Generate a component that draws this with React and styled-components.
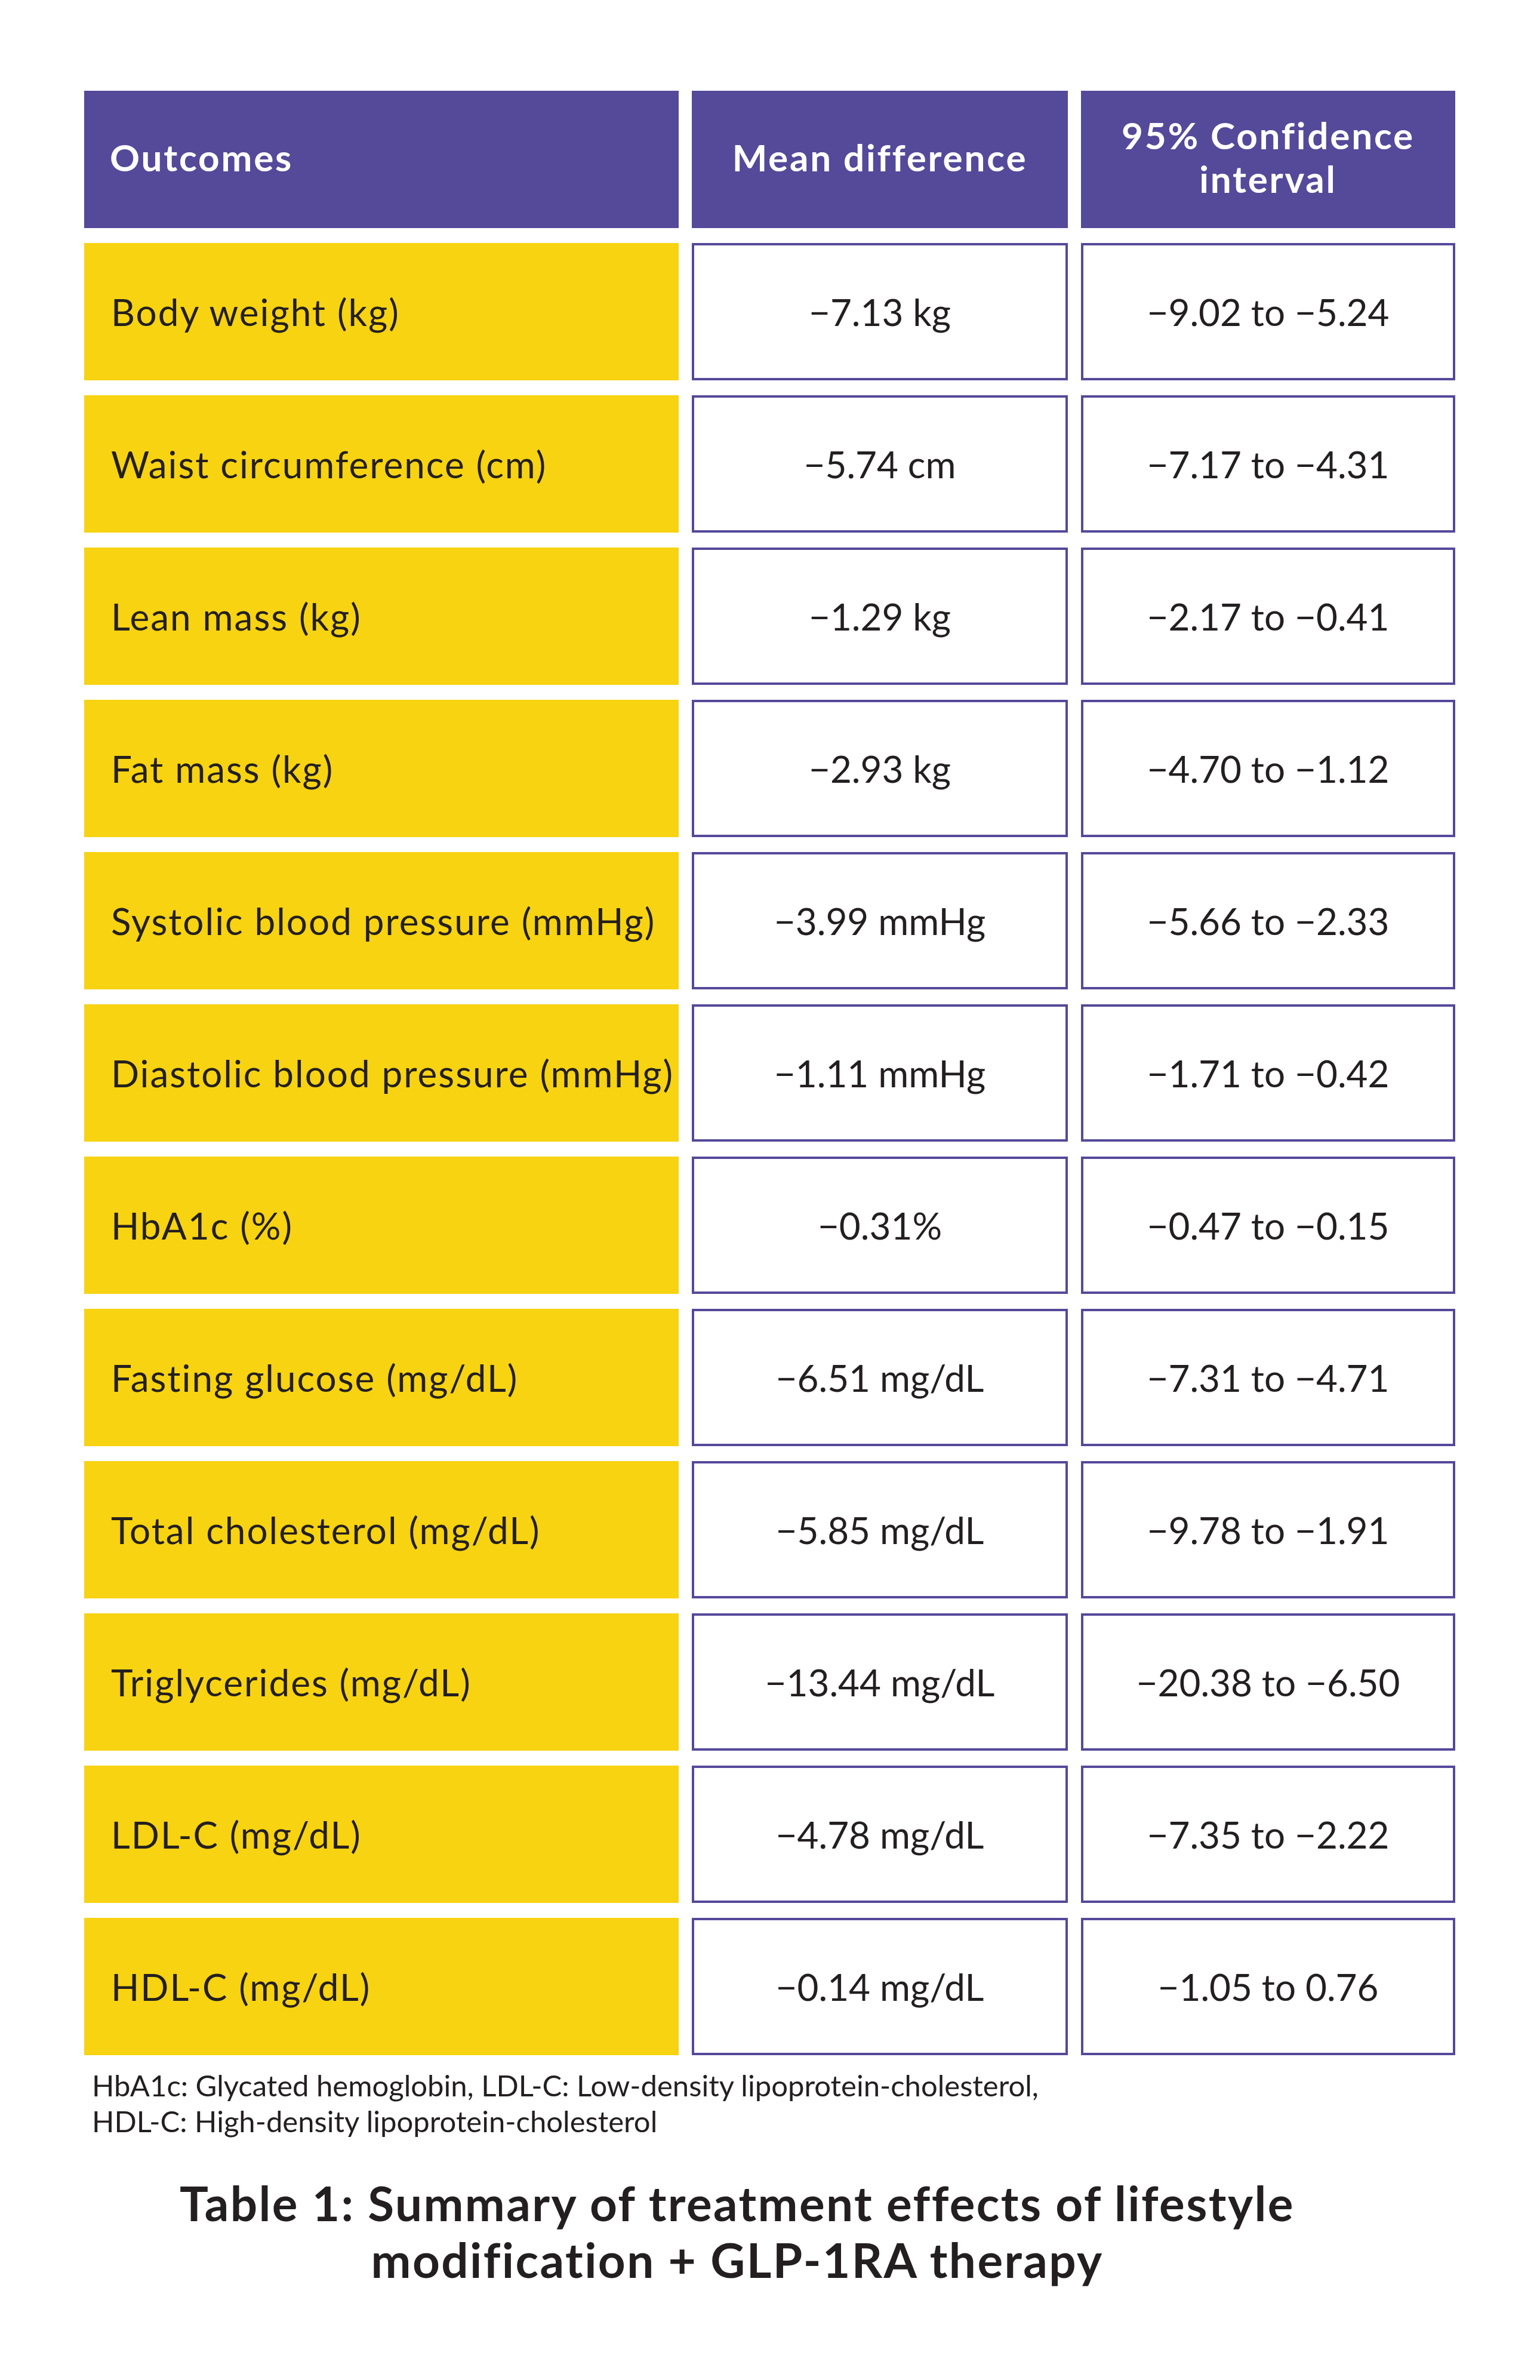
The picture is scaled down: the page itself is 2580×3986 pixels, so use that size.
import React from 'react';
import styled, {createGlobalStyle} from 'styled-components';

const purple = '#55499a';
const yellow = '#f7d311';
const ink = '#231f20';

const GlobalStyle = createGlobalStyle`
  html, body {
    margin: 0;
    padding: 0;
    background: #fff;
  }
  body {
    font-family: Lato, "Open Sans", sans-serif;
    color: ${ink};
  }
`;

const Page = styled.div`
  width: 2580px;
  min-height: 3986px;
  box-sizing: border-box;
  padding: 152px 141px 0;
`;

const Table = styled.div`
  display: grid;
  grid-template-columns: 996px 630px 627px;
  column-gap: 22px;
  row-gap: 25px;
  grid-auto-rows: 230px;
`;

const HeadCell = styled.div`
  background: ${purple};
  color: #fff;
  font-weight: 700;
  font-size: 62px;
  line-height: 73px;
  letter-spacing: 2.8px;
  display: flex;
  align-items: center;
  justify-content: ${p => (p.$left ? 'flex-start' : 'center')};
  text-align: ${p => (p.$left ? 'left' : 'center')};
  padding: ${p => (p.$left ? '0 0 8px 43px' : '0 20px 8px')};
  box-sizing: border-box;
`;

const LabelCell = styled.div`
  background: ${yellow};
  font-size: 62px;
  letter-spacing: 2px;
  display: flex;
  align-items: center;
  padding-left: 45px;
  white-space: nowrap;
  box-sizing: border-box;
`;

const ValueCell = styled.div`
  background: #fff;
  border: 4px solid ${purple};
  font-size: 62px;
  display: flex;
  align-items: center;
  justify-content: center;
  white-space: nowrap;
  box-sizing: border-box;
`;

const Footnote = styled.p`
  margin: 20px 0 0 13px;
  font-size: 49px;
  line-height: 60px;
`;

const Caption = styled.h2`
  margin: 60px 110px 0 0;
  font-size: 80px;
  line-height: 95px;
  font-weight: 700;
  letter-spacing: 2.4px;
  text-align: center;
`;

const rows = [
  ['Body weight (kg)', '−7.13 kg', '−9.02 to −5.24'],
  ['Waist circumference (cm)', '−5.74 cm', '−7.17 to −4.31'],
  ['Lean mass (kg)', '−1.29 kg', '−2.17 to −0.41'],
  ['Fat mass (kg)', '−2.93 kg', '−4.70 to −1.12'],
  ['Systolic blood pressure (mmHg)', '−3.99 mmHg', '−5.66 to −2.33'],
  ['Diastolic blood pressure (mmHg)', '−1.11 mmHg', '−1.71 to −0.42'],
  ['HbA1c (%)', '−0.31%', '−0.47 to −0.15'],
  ['Fasting glucose (mg/dL)', '−6.51 mg/dL', '−7.31 to −4.71'],
  ['Total cholesterol (mg/dL)', '−5.85 mg/dL', '−9.78 to −1.91'],
  ['Triglycerides (mg/dL)', '−13.44 mg/dL', '−20.38 to −6.50'],
  ['LDL-C (mg/dL)', '−4.78 mg/dL', '−7.35 to −2.22'],
  ['HDL-C (mg/dL)', '−0.14 mg/dL', '−1.05 to 0.76'],
];

const App = () => {
  return (
    <Page>
      <GlobalStyle />
      <Table>
        <HeadCell $left>Outcomes</HeadCell>
        <HeadCell>Mean difference</HeadCell>
        <HeadCell>95% Confidence<br />interval</HeadCell>
        {rows.map(r => (
          <React.Fragment key={r[0]}>
            <LabelCell>{r[0]}</LabelCell>
            <ValueCell>{r[1]}</ValueCell>
            <ValueCell>{r[2]}</ValueCell>
          </React.Fragment>
        ))}
      </Table>
      <Footnote>
        HbA1c: Glycated hemoglobin, LDL-C: Low-density lipoprotein-cholesterol,<br />
        HDL-C: High-density lipoprotein-cholesterol
      </Footnote>
      <Caption>
        Table 1: Summary of treatment effects of lifestyle<br />
        modification + GLP-1RA therapy
      </Caption>
    </Page>
  );
};

export default App;
